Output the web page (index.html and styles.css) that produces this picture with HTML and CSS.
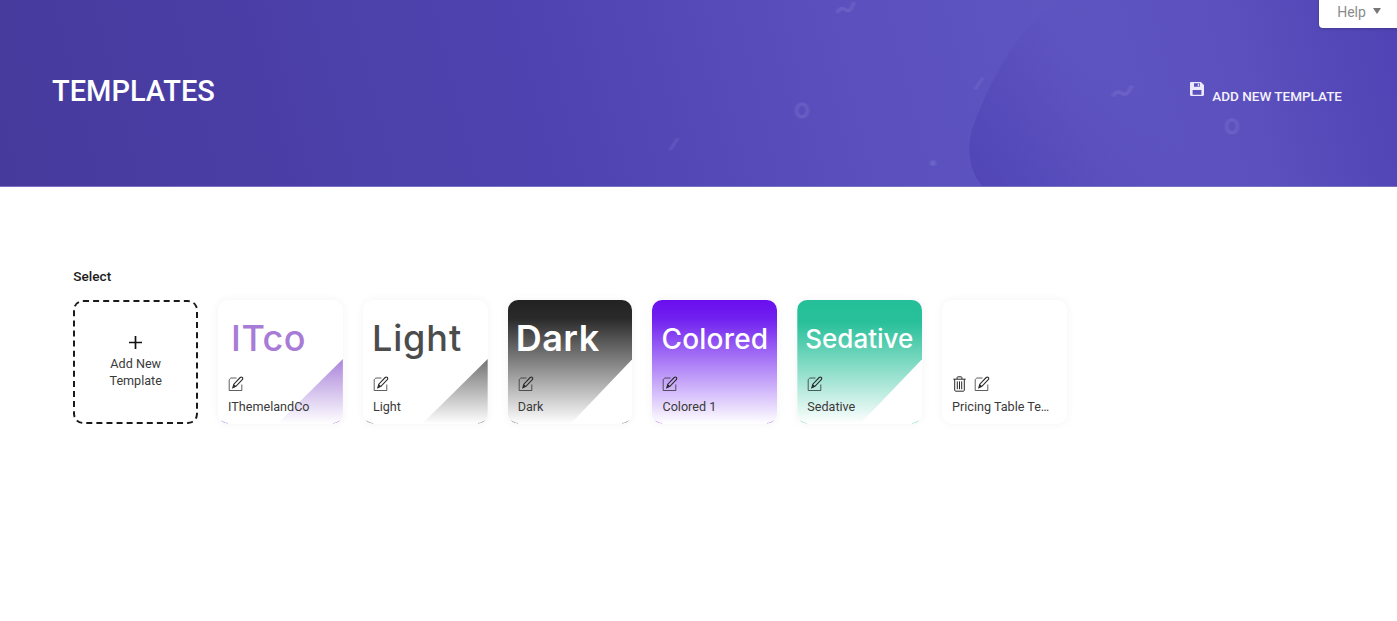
FILE: index.html
```html
<!DOCTYPE html>
<html lang="en">
<head>
<meta charset="utf-8">
<title>Templates</title>
<link rel="stylesheet" href="styles.css">
</head>
<body>
<svg class="sprites" width="0" height="0" aria-hidden="true">
  <symbol id="edit" viewBox="0 0 16 16">
    <path d="M8.5 2H2.8L1.2 3.6v10.9h12.6V8.5" fill="none" stroke="currentColor" stroke-opacity=".75" stroke-width="1"/>
    <path d="M4.8 11.8l1-3.6 6.4-6.7c.6-.6 1.5-.6 2.1 0 .6.6.6 1.5 0 2.1L7.9 10.4z" fill="none" stroke="currentColor" stroke-width="1.1"/>
    <path d="M4.8 11.8l1-3.6 2.5 2z" fill="currentColor"/>
  </symbol>
  <symbol id="trash" viewBox="0 0 14 16">
    <path d="M.8 3.2h12.4M2.2 3.2v11c0 .6.4 1 .9 1h7.8c.5 0 .9-.4.9-1v-11M4.6 3V1.6c0-.4.3-.8.7-.8h3.4c.4 0 .7.4.7.8V3M4.8 5.4v7.8M7 5.4v7.8M9.2 5.4v7.8" fill="none" stroke="currentColor" stroke-width="1"/>
  </symbol>
</svg>

<header class="hero">
  <svg class="hero-art" viewBox="0 0 1397 187" preserveAspectRatio="none" aria-hidden="true">
    <defs>
      <linearGradient id="blob" gradientUnits="userSpaceOnUse" x1="975" y1="180" x2="1135" y2="50">
        <stop offset="0" stop-color="#4f43b4" stop-opacity=".8"/>
        <stop offset=".5" stop-color="#5448b8" stop-opacity=".45"/>
        <stop offset="1" stop-color="#5e53c0" stop-opacity="0"/>
      </linearGradient>
      <filter id="soft" x="-20%" y="-20%" width="140%" height="140%"><feGaussianBlur stdDeviation=".8"/></filter>
    </defs>
    <path d="M1060 0C1015 25 985 95 972 130c-6 22-2 42 10 57h235c-60-65-105-140-157-187z" fill="url(#blob)"/>
    <g fill="none" stroke="#8a81d6" stroke-opacity=".3" filter="url(#soft)">
      <ellipse cx="802" cy="111" rx="5.5" ry="6.5" stroke-width="3.5"/>
      <ellipse cx="1232" cy="127" rx="5.5" ry="6.5" stroke-width="3.5"/>
      <path d="M837 13c3-6 6-5 9-3s5 1 8-8" stroke-width="3.5"/>
      <path d="M1113 97c3-6 6-5 9-3s6 1 10-8" stroke-width="3.5"/>
      <path d="M670 151l8-12" stroke-width="2.5"/>
      <path d="M975 90l8-12" stroke-width="2.5"/>
    </g>
    <circle cx="933" cy="164" r="3" fill="#8a81d6" fill-opacity=".4" filter="url(#soft)"/>
  </svg>
  <h1 class="hero-title">TEMPLATES</h1>
  <a class="add-link" href="#">
    <svg class="save-icon" viewBox="0 0 14 14" aria-hidden="true">
      <path fill-rule="evenodd" d="M1.2 0h9.6L14 3v9.8c0 .7-.5 1.2-1.2 1.2H1.2C.5 14 0 13.5 0 12.8V1.2C0 .5.5 0 1.2 0zM4 1.2v3.6h6V1.2zm3.8.5h1.4v2.5H7.8zM2.6 8v4.8h8.8V8z" fill="#eceafa"/>
    </svg>
    <span>ADD NEW TEMPLATE</span>
  </a>
  <button class="help-tab" type="button">Help<i class="caret"></i></button>
</header>

<main class="content">
  <div class="select-label">Select</div>
  <div class="card-row">
    <a class="card card-add" href="#">
      <svg class="plus" viewBox="0 0 15 15" aria-hidden="true"><path d="M7.5 1v13M1 7.5h13" fill="none" stroke="#111" stroke-width="1.7"/></svg>
      <span class="add-text">Add New<br>Template</span>
    </a>

    <div class="card card-itco">
      <div class="fill fill-corner"></div>
      <div class="big big-itco">ITco</div>
      <div class="actions"><svg class="ico"><use href="#edit"/></svg></div>
      <div class="name">IThemelandCo</div>
    </div>

    <div class="card card-light">
      <div class="fill fill-corner"></div>
      <div class="big big-light">Light</div>
      <div class="actions"><svg class="ico"><use href="#edit"/></svg></div>
      <div class="name">Light</div>
    </div>

    <div class="card card-dark">
      <div class="fill fill-cut"></div>
      <div class="big big-white">Dark</div>
      <div class="actions"><svg class="ico"><use href="#edit"/></svg></div>
      <div class="name">Dark</div>
    </div>

    <div class="card card-colored">
      <div class="fill"></div>
      <div class="big big-white big-colored">Colored</div>
      <div class="actions"><svg class="ico"><use href="#edit"/></svg></div>
      <div class="name">Colored 1</div>
    </div>

    <div class="card card-sedative">
      <div class="fill fill-cut"></div>
      <div class="big big-white big-sedative">Sedative</div>
      <div class="actions"><svg class="ico"><use href="#edit"/></svg></div>
      <div class="name">Sedative</div>
    </div>

    <div class="card">
      <div class="big"></div>
      <div class="actions"><svg class="ico ico-trash"><use href="#trash"/></svg><svg class="ico"><use href="#edit"/></svg></div>
      <div class="name">Pricing Table Te…</div>
    </div>
  </div>
</main>
</body>
</html>
```
FILE: styles.css
```css
* { box-sizing: border-box; }
html, body { margin: 0; padding: 0; }
body {
  background: #fff;
  font-family: Roboto, "Liberation Sans", sans-serif;
  color: #222;
  height: 621px;
  overflow: hidden;
}
.sprites { display: block; height: 0; }

.hero {
  position: relative;
  height: 187px;
  padding: 0 55px 0 52px;
  display: flex;
  align-items: center;
  justify-content: space-between;
  background: linear-gradient(76deg, #463a9c 0%, #4f43b1 40%, #5a4fbd 60%, #5f55c1 76%, #5b50bd 88%, #4f42b5 100%);
  border-bottom: 1px solid #7a70c4;
  overflow: hidden;
}
.hero-art { position: absolute; inset: 0; width: 100%; height: 100%; }
.hero-title {
  position: relative;
  margin: 0 0 4px;
  font-size: 29px;
  line-height: 34px;
  font-weight: 500;
  color: #fff;
}
.add-link {
  position: relative;
  display: flex;
  align-items: flex-start;
  gap: 8px;
  margin-top: 1px;
  color: #f4f2fc;
  font-size: 13.5px;
  font-weight: 500;
  line-height: 16px;
  text-decoration: none;
}
.add-link span { padding-top: 5px; }
.save-icon { width: 14px; height: 14px; margin-top: -1px; }
.help-tab {
  position: absolute;
  top: 0;
  right: 0;
  width: 78px;
  height: 28px;
  padding: 0 0 4px 2px;
  border: 0;
  border-radius: 0 0 0 4px;
  background: #fff;
  box-shadow: 0 1px 3px rgba(0,0,0,.2);
  color: #8a8a8a;
  font: 400 14px/16px Roboto, sans-serif;
  display: flex;
  align-items: center;
  justify-content: center;
  gap: 7px;
}
.caret {
  width: 0;
  height: 0;
  margin-bottom: 3px;
  border-left: 4.5px solid transparent;
  border-right: 4.5px solid transparent;
  border-top: 6px solid #777;
}

.content { padding: 82px 0 0 73.3px; }
.select-label {
  font-size: 13.6px;
  line-height: 15px;
  font-weight: 500;
  color: #1c1c1c;
  margin-bottom: 16px;
}
.card-row { display: flex; gap: 20px; }
.card {
  position: relative;
  flex: 0 0 124.8px;
  height: 124.4px;
  border-radius: 10px;
  background: #fff;
  box-shadow: 0 0 10px rgba(0,0,0,.05);
  overflow: hidden;
  padding: 0 10px;
  display: flex;
  flex-direction: column;
}
.card-itco::after,
.card-light::after,
.card-dark::after,
.card-colored::after,
.card-sedative::after {
  content: "";
  position: absolute;
  inset: 0;
  border-radius: 10px;
  border: 1px solid transparent;
  border-bottom-color: var(--edge);
  -webkit-mask-image: linear-gradient(90deg, #000 10px, transparent 10px, transparent calc(100% - 10px), #000 calc(100% - 10px));
  mask-image: linear-gradient(90deg, #000 10px, transparent 10px, transparent calc(100% - 10px), #000 calc(100% - 10px));
}
.fill { position: absolute; inset: 0; }
.fill-corner { clip-path: polygon(100% 47.5%, 100% 100%, 47% 100%); }
.fill-cut { clip-path: polygon(0 0, 100% 0, 100% 47.5%, 50% 100%, 0 100%); }
.card-itco { --edge: #c8aee6; }
.card-light { --edge: #aaa; }
.card-dark { --edge: #aaa; }
.card-colored { --edge: #c9a8f7; }
.card-sedative { --edge: #a5e3d0; }
.card-itco .fill { background: linear-gradient(#9b6fd0 0%, #a67fd8 45%, #fff 100%); }
.card-light .fill { background: linear-gradient(#333 0%, #6a6a6a 45%, #fff 100%); }
.card-dark .fill { background: linear-gradient(#222 0%, #2a2a2a 15%, #fff 100%); }
.card-colored .fill { background: linear-gradient(#6a0dee 0%, #7020f0 15%, #fff 100%); }
.card-sedative .fill { background: linear-gradient(#24bf98 0%, #28c09a 18%, #fff 100%); }

.big {
  position: relative;
  height: 76px;
  padding-top: 17px;
  font-family: Inter, Lato, sans-serif;
  font-size: 36px;
  line-height: 42px;
  font-weight: 500;
  white-space: nowrap;
}
.big-itco { padding-left: 3px; color: #a87bd6; letter-spacing: .5px; }
.big-light { color: #4c4c4c; margin-left: -1px; letter-spacing: .9px; }
.big-white { color: #fff; margin-left: -2px; font-weight: 600; letter-spacing: .5px; }
.big-colored { font-size: 28px; margin-left: -1px; font-weight: 500; letter-spacing: .2px; padding-top: 18px; }
.big-sedative { font-size: 26px; margin-left: -2px; font-weight: 500; letter-spacing: 0; padding-top: 18px; }

.actions {
  position: relative;
  display: flex;
  gap: 7px;
  height: 16px;
  color: #2a2a2a;
}
.ico { width: 16px; height: 16px; display: block; flex: none; }
.ico-trash { width: 15px; }
.name {
  position: relative;
  margin-top: 7px;
  font-size: 12.6px;
  line-height: 16px;
  color: #3a3a3a;
  white-space: nowrap;
}

.card-add {
  border: 2px dashed #1a1a1a;
  box-shadow: none;
  align-items: center;
  justify-content: flex-start;
  padding: 33px 0 0;
  text-decoration: none;
  text-align: center;
}
.plus { width: 15px; height: 15px; flex: none; display: block; }
.add-text {
  margin-top: 6px;
  font-size: 12.6px;
  line-height: 16.5px;
  color: #3a3a3a;
}
```
